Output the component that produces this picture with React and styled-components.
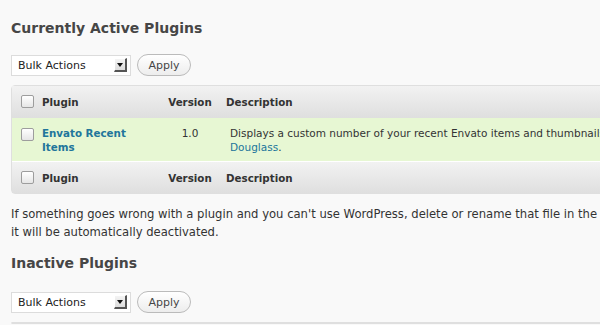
import styled, { createGlobalStyle } from 'styled-components';

const GlobalStyle = createGlobalStyle`
  body {
    margin: 0;
    background: #f9f9f9;
    font-family: "DejaVu Sans", "Liberation Sans", sans-serif;
    color: #333;
    overflow: hidden;
  }
`;

const Page = styled.div`
  width: 600px;
  height: 325px;
  overflow: hidden;
  padding-left: 11px;
  box-sizing: border-box;
`;

const Heading = styled.h3`
  margin: ${(p) => p.$top}px 0 0;
  font-size: 14px;
  font-weight: bold;
  color: #464646;
  line-height: 20px;
  white-space: nowrap;
`;

const Toolbar = styled.div`
  display: flex;
  align-items: center;
  gap: 6px;
  margin-top: ${(p) => p.$top}px;
  height: 22px;
`;

const Select = styled.div`
  width: 120px;
  height: 21px;
  box-sizing: border-box;
  background: #fff;
  border: 1px solid #dcdcdc;
  display: flex;
  align-items: center;
  justify-content: space-between;
  padding: 0 3px 0 6px;
  font-size: 11px;
  color: #222;
`;

const Arrow = styled.span`
  width: 13px;
  height: 14px;
  box-sizing: border-box;
  background: linear-gradient(#f4f4f4, #dcdcdc);
  border-right: 2px solid #555;
  border-bottom: 2px solid #555;
  border-top: 1px solid #fff;
  border-left: 1px solid #fff;
  display: flex;
  align-items: center;
  justify-content: center;
  &::after {
    content: '';
    border-left: 3px solid transparent;
    border-right: 3px solid transparent;
    border-top: 4px solid #111;
  }
`;

const Button = styled.button`
  height: 22px;
  width: 54px;
  border: 1px solid #bbb;
  border-radius: 11px;
  background: linear-gradient(#fff, #ededed);
  font-family: inherit;
  font-size: 11px;
  color: #464646;
  padding: 0;
`;

const Table = styled.table`
  margin-top: 9px;
  width: 760px;
  border-collapse: separate;
  border-spacing: 0;
  border: 1px solid #dfdfdf;
  border-radius: 4px;
  font-size: 10.5px;
`;

const HeadCell = styled.th`
  height: 31px;
  padding: 0 0 0 ${(p) => p.$pad || 0}px;
  text-align: ${(p) => p.$align || 'left'};
  font-size: 10.3px;
  font-weight: bold;
  color: #333;
  background: linear-gradient(#f2f2f2, #dfdfdf);
  border-bottom: ${(p) => (p.$last ? 'none' : '1px solid #dfdfdf')};
  border-top: ${(p) => (p.$last ? '1px solid #fff' : 'none')};
`;

const Cell = styled.td`
  background: #e7f7d3;
  vertical-align: top;
  padding: 8px 0 0 ${(p) => p.$pad || 0}px;
  height: 35px;
  text-align: ${(p) => p.$align || 'left'};
  line-height: 14px;
  color: #333;
  white-space: ${(p) => (p.$nowrap ? 'nowrap' : 'normal')};
`;

const Check = styled.span`
  display: inline-block;
  width: 11px;
  height: 11px;
  border: 1px solid #9d9d9d;
  border-radius: 2px;
  background: linear-gradient(#fff, #e6e6e6);
  margin-left: 9px;
  vertical-align: middle;
`;

const PluginName = styled.a`
  display: block;
  width: 90px;
  font-size: 10.3px;
  font-weight: bold;
  color: #21759b;
  text-decoration: none;
`;

const Link = styled.a`
  color: #21759b;
  text-decoration: none;
`;

const Note = styled.p`
  margin: 11px 0 0;
  font-size: 11.6px;
  line-height: 18px;
  color: #333;
  width: 620px;
  white-space: nowrap;
`;

const Bulk = ({ top }) => (
  <Toolbar $top={top}>
    <Select>
      Bulk Actions
      <Arrow />
    </Select>
    <Button>Apply</Button>
  </Toolbar>
);

const HeaderRow = ({ last }) => (
  <tr>
    <HeadCell $last={last} style={{ width: 30 }}>
      <Check />
    </HeadCell>
    <HeadCell $last={last} style={{ width: 116 }}>Plugin</HeadCell>
    <HeadCell $last={last} $align="center" style={{ width: 64 }}>Version</HeadCell>
    <HeadCell $last={last} $pad={4}>Description</HeadCell>
  </tr>
);

const App = () => (
  <Page>
    <GlobalStyle />
    <Heading $top={18}>Currently Active Plugins</Heading>
    <Bulk top={16} />
    <Table>
      <thead>
        <HeaderRow />
      </thead>
      <tbody>
        <tr>
          <Cell>
            <Check />
          </Cell>
          <Cell>
            <PluginName>Envato Recent Items</PluginName>
          </Cell>
          <Cell $align="center">1.0</Cell>
          <Cell $pad={8} $nowrap>
            Displays a custom number of your recent Envato items and thumbnails in the sidebar. By Drew
            <br />
            <Link>Douglass</Link>.
          </Cell>
        </tr>
      </tbody>
      <tfoot>
        <HeaderRow last />
      </tfoot>
    </Table>
    <Note>
      If something goes wrong with a plugin and you can't use WordPress, delete or rename that file in the
      <br />
      it will be automatically deactivated.
    </Note>
    <Heading $top={12}>Inactive Plugins</Heading>
    <Bulk top={18} />
    <Table />
  </Page>
);

export default App;
